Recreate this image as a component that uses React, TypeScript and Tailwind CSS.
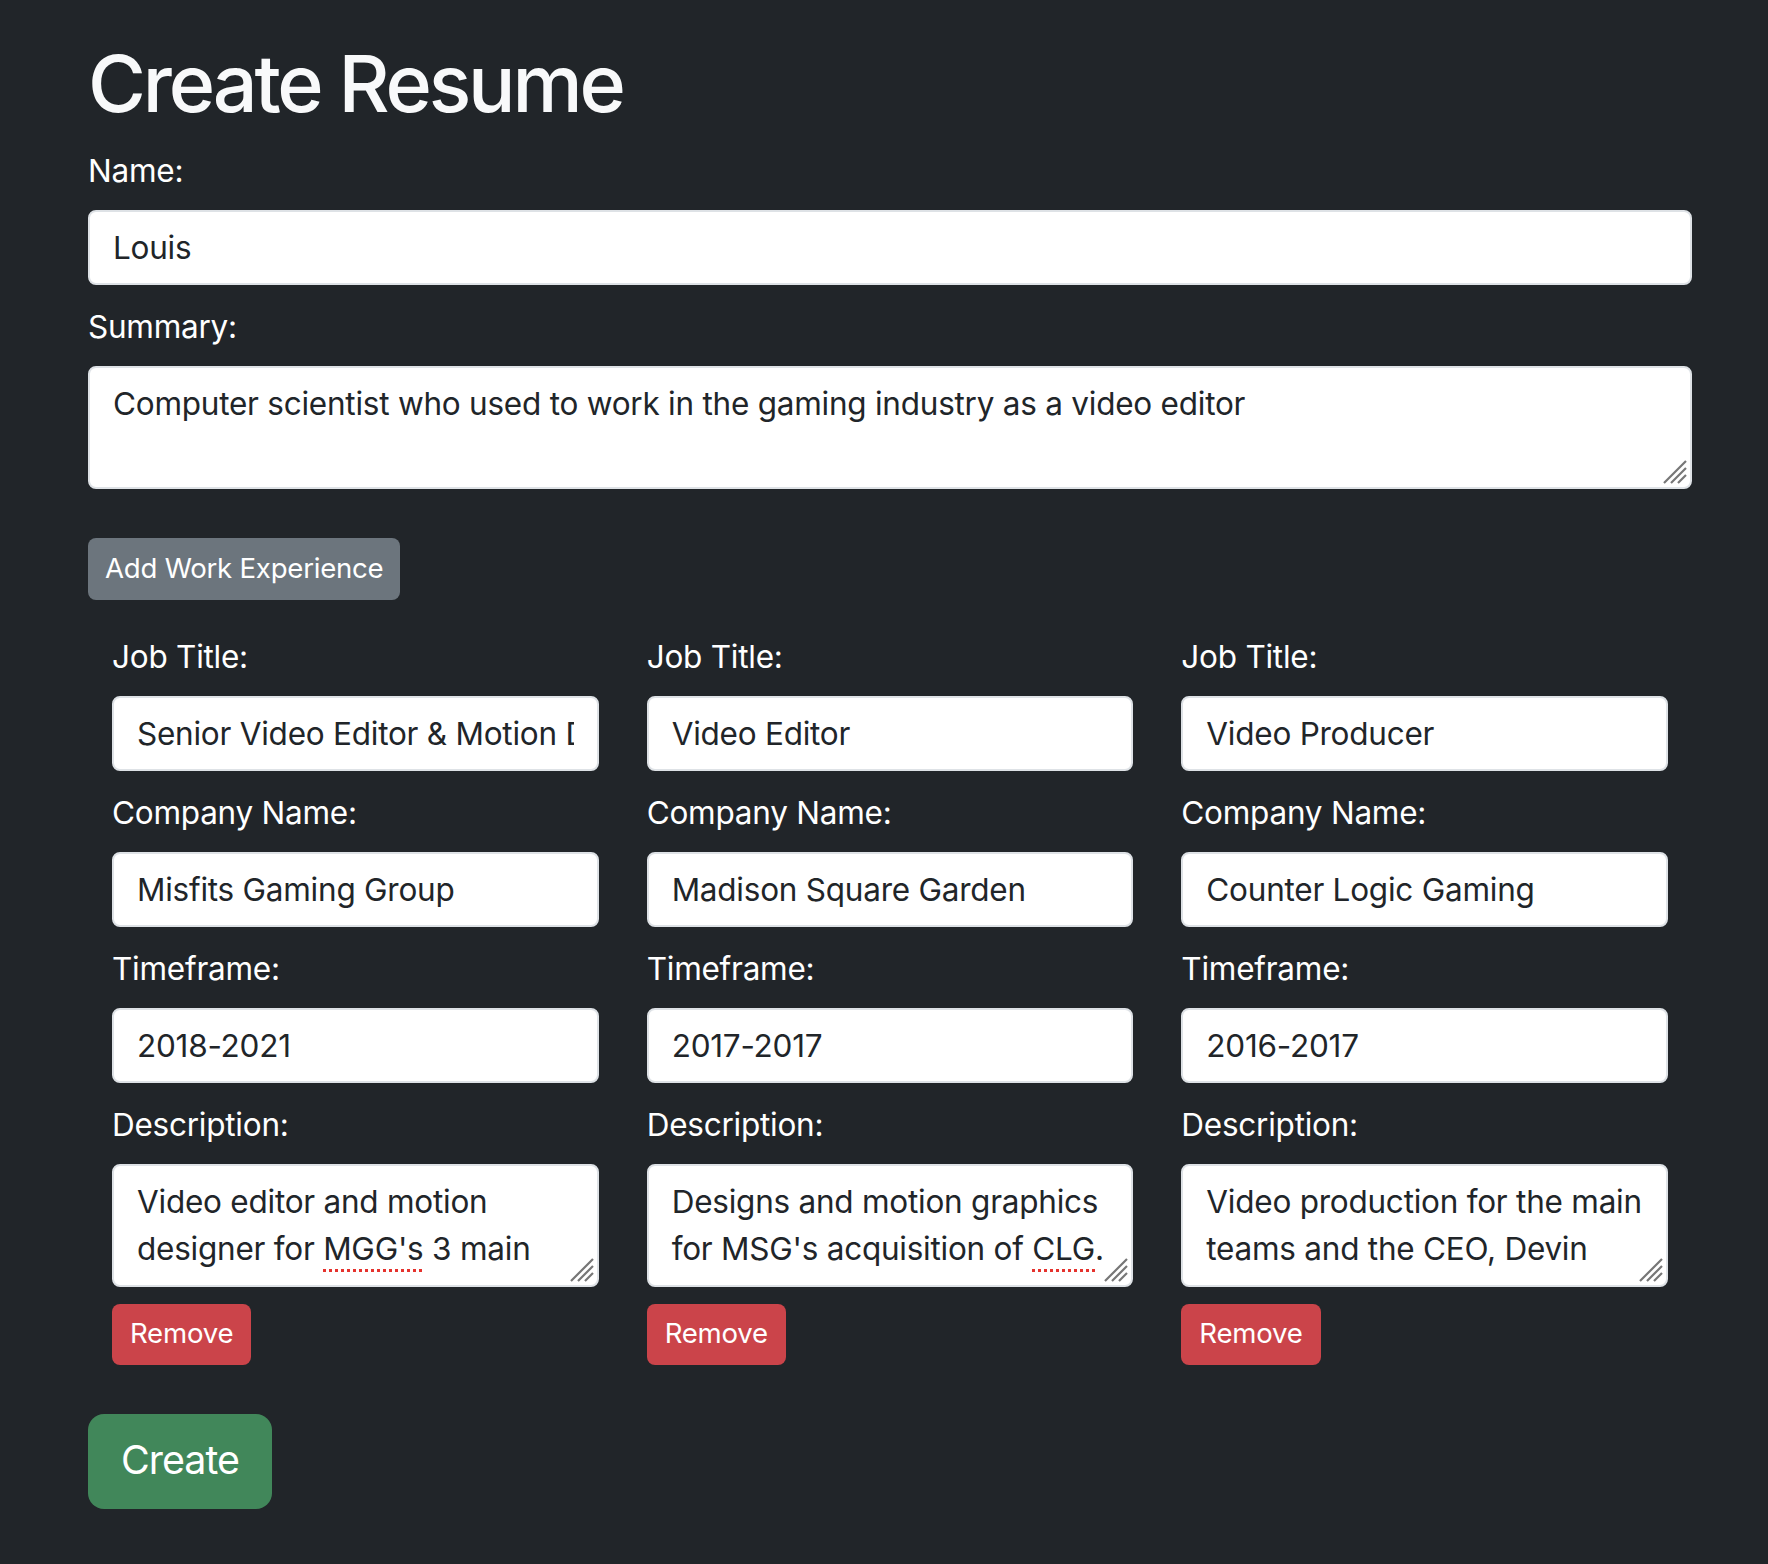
import React from 'react';

interface Job {
  title: string;
  company: string;
  timeframe: string;
  lines: React.ReactNode[];
}

const font = { fontFamily: 'Inter, "Noto Sans", "Liberation Sans", sans-serif' };

const spell = 'underline decoration-dotted decoration-[#e5322d] decoration-3 underline-offset-[9px]';

const jobs: Job[] = [
  {
    title: 'Senior Video Editor & Motion Designer',
    company: 'Misfits Gaming Group',
    timeframe: '2018-2021',
    lines: [
      'Video editor and motion',
      <>designer for <span className={spell}>MGG's</span> 3 main</>,
    ],
  },
  {
    title: 'Video Editor',
    company: 'Madison Square Garden',
    timeframe: '2017-2017',
    lines: [
      'Designs and motion graphics',
      <>for MSG's acquisition of <span className={spell}>CLG</span>.</>,
    ],
  },
  {
    title: 'Video Producer',
    company: 'Counter Logic Gaming',
    timeframe: '2016-2017',
    lines: ['Video production for the main', 'teams and the CEO, Devin'],
  },
];

const Grip = () => (
  <svg className="absolute right-[3px] bottom-[3px] w-[25px] h-[25px]" viewBox="0 0 25 25">
    <path d="M2 24 L24 2 M9 24 L24 9 M16 24 L24 16" stroke="#777" strokeWidth="2.2" fill="none" />
  </svg>
);

const Label = ({ children, className = '' }: { children: React.ReactNode; className?: string }) => (
  <label className={`block text-[31.5px] leading-[47px] mb-[16px] text-white ${className}`}>{children}</label>
);

const Field = ({ value }: { value: string }) => (
  <input
    type="text"
    readOnly
    value={value}
    className="block w-full h-[75px] rounded-[8px] border-2 border-[#dee2e6] bg-white px-[23px] text-[31.5px] text-[#212529] outline-none"
  />
);

const TextBox = ({ lines }: { lines: React.ReactNode[] }) => (
  <div className="relative w-full h-[123px] rounded-[8px] border-2 border-[#dee2e6] bg-white px-[23px] py-[12px] text-[31.5px] leading-[47.3px] text-[#212529] overflow-hidden">
    {lines.map((l, i) => (
      <div key={i} className="whitespace-nowrap">{l}</div>
    ))}
    <Grip />
  </div>
);

export default function App() {
  return (
    <div className="min-h-screen bg-[#212529] text-[#f8f9fa] tracking-[-0.015em]" style={font}>
      <div className="w-[1604px] ml-[88px] pt-[36px] pb-[56px]">
        <h1 className="text-[79px] leading-[94.5px] font-medium tracking-[-0.04em] mb-[16px]">Create Resume</h1>

        <Label>Name:</Label>
        <Field value="Louis" />

        <Label className="mt-[18px]">Summary:</Label>
        <TextBox lines={['Computer scientist who used to work in the gaming industry as a video editor']} />

        <button className="mt-[49px] h-[62px] px-[17px] rounded-[8px] bg-[#6c757d] text-white text-[27.6px]">
          Add Work Experience
        </button>

        <div className="grid grid-cols-3 mt-[33px]">
          {jobs.map((job, i) => (
            <div key={i} className="px-[24px]">
              <Label>Job Title:</Label>
              <Field value={job.title} />
              <Label className="mt-[18px]">Company Name:</Label>
              <Field value={job.company} />
              <Label className="mt-[18px]">Timeframe:</Label>
              <Field value={job.timeframe} />
              <Label className="mt-[18px]">Description:</Label>
              <TextBox lines={job.lines} />
              <button className="mt-[17px] h-[61px] px-[18px] rounded-[8px] bg-[#cb444a] text-white text-[27.6px]">
                Remove
              </button>
            </div>
          ))}
        </div>

        <button className="mt-[49px] h-[95px] px-[33px] rounded-[16px] bg-[#41875a] text-white text-[39.4px] tracking-[-0.025em]">
          Create
        </button>
      </div>
    </div>
  );
}
